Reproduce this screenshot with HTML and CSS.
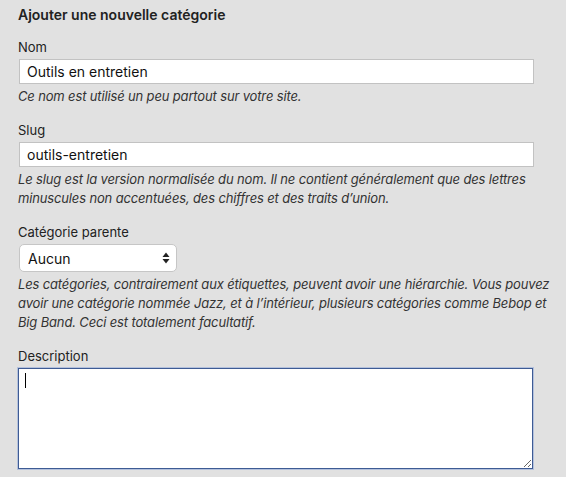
FILE: index.html
```html
<!doctype html>
<html lang="fr">

<head>
    <title>Ajouter une nouvelle catégorie</title>
    <meta charset="utf-8">
    <link rel="stylesheet" href="styles.css">
</head>

<body>
    <form class="form-wrap">
        <h2 class="titre">Ajouter une nouvelle catégorie</h2>

        <div class="champ">
            <label for="tag-name">Nom</label>
            <input id="tag-name" class="texte" value="Outils en entretien">
            <p class="aide">Ce nom est utilisé un peu partout sur votre site.</p>
        </div>

        <div class="champ">
            <label for="tag-slug">Slug</label>
            <input id="tag-slug" class="texte" value="outils-entretien">
            <p class="aide">Le slug est la version normalisée du nom. Il ne contient généralement que des lettres minuscules non accentuées, des chiffres et des traits d’union.</p>
        </div>

        <div class="champ">
            <label for="parent">Catégorie parente</label>
            <div class="select-wrap">
                <select id="parent" class="liste">
                    <option value="-1">Aucun</option>
                </select>
                <svg class="fleches" width="8" height="12" viewBox="0 0 8 12">
                    <path d="M4 0.5 L7.5 5 L0.5 5 Z" fill="#222"/>
                    <path d="M4 11.5 L7.5 7 L0.5 7 Z" fill="#222"/>
                </svg>
            </div>
            <p class="aide">Les catégories, contrairement aux étiquettes, peuvent avoir une hiérarchie. Vous pouvez avoir une catégorie nommée Jazz, et à l’intérieur, plusieurs catégories comme Bebop et Big Band. Ceci est totalement facultatif.</p>
        </div>

        <div class="champ">
            <label for="tag-description">Description</label>
            <div class="zone-wrap">
                <textarea id="tag-description" class="zone" rows="5"></textarea>
                <span class="curseur"></span>
            </div>
        </div>
    </form>
</body>

</html>
```

FILE: styles.css
```css
body {
    margin: 0;
    background-color: #e1e1e1;
    color: #222;
    font-family: Inter, "Noto Sans", sans-serif;
    font-size: 13px;
}

.form-wrap {
    width: 540px;
    padding-left: 18px;
}

.titre {
    margin: 0;
    padding-top: 5px;
    font-size: 14px;
    font-weight: 600;
    line-height: 19px;
    margin-bottom: 14px;
}

.champ {
    margin-bottom: 15px;
}

label {
    display: block;
    line-height: 19px;
    margin-bottom: 2px;
}

.texte {
    display: block;
    box-sizing: border-box;
    width: 515px;
    height: 25px;
    margin: 0 0 0 1px;
    padding: 0 7px;
    border: 1px solid #c2c2c2;
    background: #fff;
    color: #111;
    font-family: inherit;
    font-size: 14px;
    outline: none;
}

.aide {
    margin: 3px 0 0;
    font-style: italic;
    line-height: 19px;
    letter-spacing: -0.15px;
    color: #333;
}

.select-wrap {
    position: relative;
    width: 158px;
    margin-left: 1px;
}

.liste {
    display: block;
    box-sizing: border-box;
    width: 158px;
    height: 28px;
    padding: 0 8px;
    border: 1px solid #c6c6c6;
    border-radius: 5px;
    background: #fff;
    color: #111;
    font-family: inherit;
    font-size: 14px;
    appearance: none;
    -webkit-appearance: none;
}

.fleches {
    position: absolute;
    right: 7px;
    top: 8px;
}

.zone-wrap {
    position: relative;
    width: 515px;
}

.zone {
    display: block;
    box-sizing: border-box;
    width: 515px;
    height: 101px;
    margin: 0;
    padding: 4px 6px;
    border: 1px solid #3e5b94;
    box-shadow: 0 0 0 1px #b4c1dc;
    background: #fff;
    font-family: inherit;
    font-size: 14px;
    outline: none;
}

.curseur {
    position: absolute;
    left: 7px;
    top: 5px;
    width: 1px;
    height: 15px;
    background: #000;
}
```
